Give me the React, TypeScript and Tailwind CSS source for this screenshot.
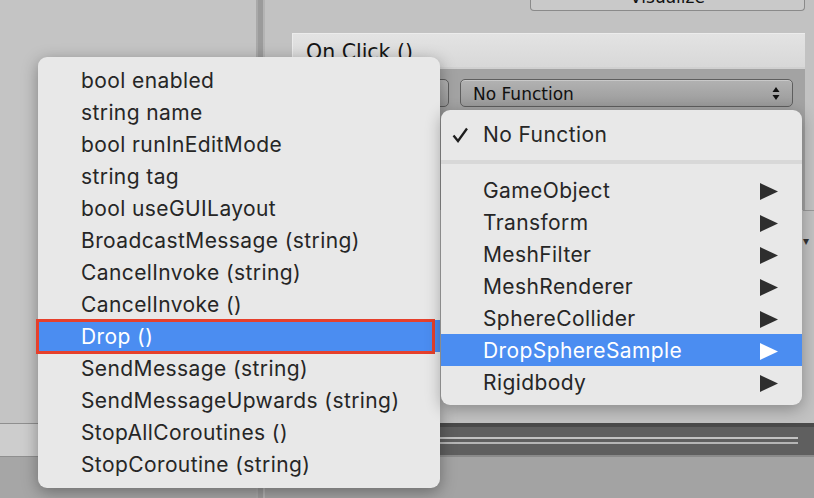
import React from "react"

const leftItems = [
    "bool enabled",
    "string name",
    "bool runInEditMode",
    "string tag",
    "bool useGUILayout",
    "BroadcastMessage (string)",
    "CancelInvoke (string)",
    "CancelInvoke ()",
    "Drop ()",
    "SendMessage (string)",
    "SendMessageUpwards (string)",
    "StopAllCoroutines ()",
    "StopCoroutine (string)",
]

const components = [
    "GameObject",
    "Transform",
    "MeshFilter",
    "MeshRenderer",
    "SphereCollider",
    "DropSphereSample",
    "Rigidbody",
]

function Arrow({ white }: { white?: boolean }) {
    return (
        <svg width="18" height="17" viewBox="0 0 18 17">
            <polygon points="0,0 18,8.5 0,17" fill={white ? "#ffffff" : "#2e2e2e"} />
        </svg>
    )
}

function Check() {
    return (
        <svg width="16" height="16" viewBox="0 0 16 16">
            <path d="M1.5 8.5 L6 14 L15 1.5" fill="none" stroke="#1e1e1e" strokeWidth="2.3" strokeLinejoin="miter" />
        </svg>
    )
}

function UpDown() {
    return (
        <svg width="8" height="13" viewBox="0 0 8 13">
            <polygon points="4,0 7.5,5 0.5,5" fill="#111" />
            <polygon points="0.5,8 7.5,8 4,13" fill="#111" />
        </svg>
    )
}

function LeftMenu() {
    return (
        <div className="absolute left-[38px] top-[57px] w-[402px] h-[431px] rounded-[9px] bg-[#e8e8e8] shadow-[0_4px_16px_rgba(0,0,0,0.35)] pt-[7px] font-['Inter',sans-serif] text-[21px] tracking-[0.4px]">
            {leftItems.map((item) => {
                const active = item === "Drop ()"
                return (
                    <div
                        key={item}
                        className={
                            "h-[32px] flex items-center pl-[43px] pt-[2px] " +
                            (active ? "bg-[#4b8df1] text-white" : "text-[#262626]")
                        }
                    >
                        {item}
                    </div>
                )
            })}
            <div className="absolute left-[-2px] top-[262px] w-[399px] h-[35px] border-[3px] border-[#e6402c]" />
        </div>
    )
}

function RightMenu() {
    return (
        <div className="absolute left-[441px] top-[110px] w-[361px] h-[295px] rounded-[9px] bg-[#e8e8e8] shadow-[0_4px_16px_rgba(0,0,0,0.3)] pt-[8px] font-['Inter',sans-serif] text-[21px] tracking-[0.4px] text-[#262626]">
            <div className="h-[32px] flex items-center pt-[2px]">
                <span className="w-[42px] pl-[11px] flex">
                    <Check />
                </span>
                <span>No Function</span>
            </div>
            <div className="h-[24px] flex items-center">
                <div className="w-full h-[4px] bg-[#d8d8d8]" />
            </div>
            {components.map((c) => {
                const active = c === "DropSphereSample"
                return (
                    <div
                        key={c}
                        className={
                            "h-[32px] flex items-center justify-between pl-[42px] pr-[24px] pt-[2px] " +
                            (active ? "bg-[#4b8df1] text-white" : "")
                        }
                    >
                        <span>{c}</span>
                        <Arrow white={active} />
                    </div>
                )
            })}
        </div>
    )
}

export default function App() {
    return (
        <div className="relative w-[814px] h-[498px] overflow-hidden flex bg-[#c2c2c2]">
            {/* left panel */}
            <div className="w-[256px] flex flex-col">
                <div className="h-[423px] bg-[#c4c4c4]" />
                <div className="h-[1px] bg-[#8f8f8f]" />
                <div className="h-[32px] bg-[#cdcdcd]" />
                <div className="h-[1px] bg-[#8f8f8f]" />
                <div className="flex-1 bg-[#a6a6a6]" />
            </div>
            {/* divider */}
            <div className="w-[9px] flex">
                <div className="w-[2px] bg-[#a9a9a9]" />
                <div className="w-[5px] bg-[#9b9b9b]" />
                <div className="w-[2px] bg-[#b4b4b4]" />
            </div>
            {/* inspector */}
            <div className="flex-1 flex flex-col">
                <div className="h-[423px] flex flex-col">
                    <div className="h-[11px] flex">
                        <div className="ml-[265px] w-[275px] h-[11px] rounded-b-[4px] border border-t-0 border-[#8a8a8a] bg-[#c9c9c9] flex items-start justify-center overflow-hidden font-['DejaVu_Sans',sans-serif] text-[17px] text-[#111] leading-none">
                            <span className="mt-[-11px]">Visualize</span>
                        </div>
                    </div>
                    <div className="mt-[22px] ml-[27px] w-[513px] h-[34px] bg-gradient-to-b from-[#e3e3e3] to-[#d8d8d8] border-l border-t border-[#ececec] flex items-center pl-[13px] pt-[3px] font-['DejaVu_Sans',sans-serif] text-[20.5px] text-[#151515]">
                        On Click ()
                    </div>
                    <div className="ml-[27px] w-[513px] h-[2px] bg-[#d0d0d0]" />
                    <div className="ml-[27px] w-[513px] h-[141px] bg-[#a3a3a3] flex items-start pt-[10px] gap-[11px] pl-[8px]">
                        <div className="w-[149px] h-[28px] rounded-[5px] border border-[#5e5e5e] bg-gradient-to-b from-[#b2b2b2] to-[#9a9a9a]" />
                        <div className="w-[333px] h-[28px] rounded-[5px] border border-[#5e5e5e] bg-gradient-to-b from-[#b2b2b2] to-[#9a9a9a] shadow-[inset_0_1px_0_rgba(255,255,255,0.3)] flex items-center justify-between pl-[12px] pr-[12px] font-['DejaVu_Sans',sans-serif] text-[17px] text-[#111]">
                            <span className="pt-[3px]">No Function</span>
                            <UpDown />
                        </div>
                    </div>
                    <div className="flex-1 flex">
                        <div className="ml-[538px] w-[11px] h-[88px] border-t border-[#9a9a9a] flex items-start pt-[24px] text-[12px] text-[#333] leading-none">
                            ▾
                        </div>
                    </div>
                </div>
                <div className="h-[34px] bg-[#5f5f5f] border-t-[4px] border-[#4a4a4a] border-b-[2px] border-b-[#8a8a8a] flex flex-col pt-[10px] gap-[3px]">
                    <div className="w-[533px] h-[2px] bg-[#c2c2c2]" />
                    <div className="w-[533px] h-[2px] bg-[#b5b5b5]" />
                </div>
                <div className="flex-1 bg-[#a3a3a3]" />
            </div>
            <LeftMenu />
            <RightMenu />
        </div>
    )
}
